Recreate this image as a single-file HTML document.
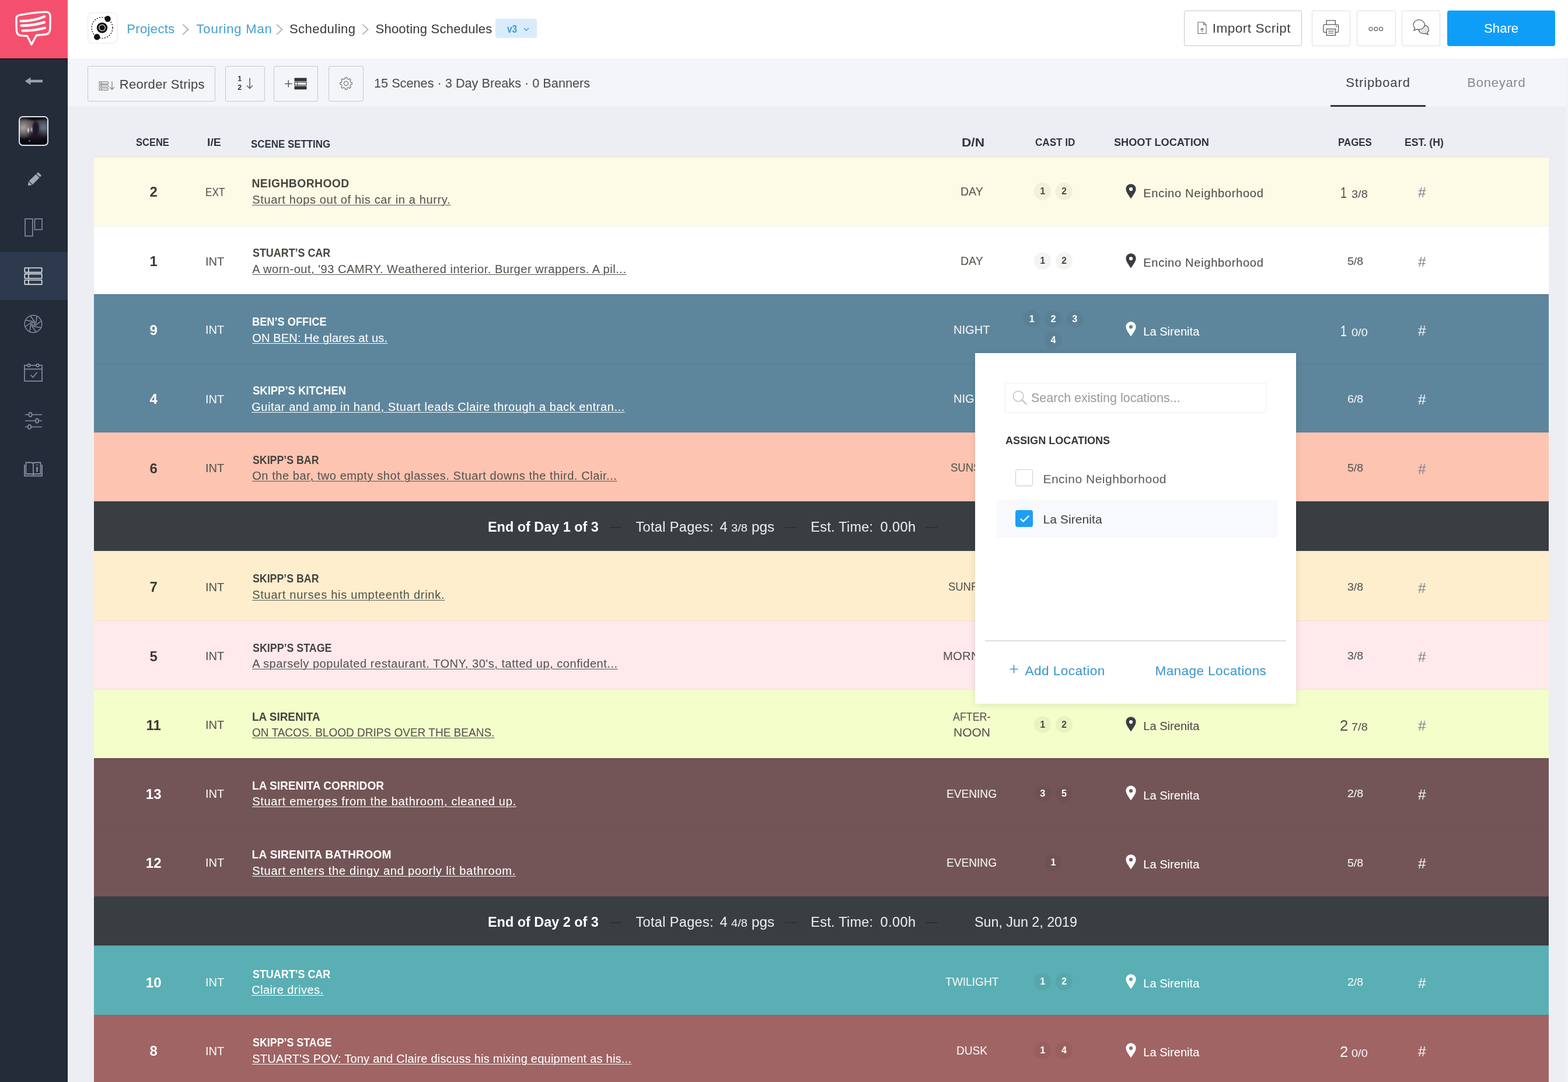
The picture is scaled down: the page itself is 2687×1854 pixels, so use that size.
<!DOCTYPE html>
<html lang="en"><head><meta charset="utf-8"><title>Shooting Schedules - Stripboard</title>
<style>
*{box-sizing:border-box;margin:0;padding:0}
html{background:#eceef3}
body{width:2687px;height:1854px;background:#eceef3;font-family:"Liberation Sans",sans-serif;color:#444}
#root{position:relative;width:2687px;height:1854px;overflow:hidden}
#app{position:absolute;left:-10px;top:-10px;width:2707px;height:1874px;overflow:hidden;filter:blur(0.6px);
 background:linear-gradient(#f4506e,#f4506e) 0 0/126px 109.5px no-repeat,linear-gradient(#242b39,#242b39) 0 0/126px 100% no-repeat,linear-gradient(#fff,#fff) 0 0/100% 109.5px no-repeat,linear-gradient(#f3f5f9,#f3f5f9) 0 0/100% 192px no-repeat,#eceef3}
#page{position:absolute;left:10px;top:10px;width:2687px;height:1854px}
.abs,.t,.ic,.row,.db,.btn,.badge{position:absolute}
.t{white-space:nowrap;line-height:1;display:block;transform-origin:0 0;-webkit-text-stroke:.08px}
.t.c{text-align:center}
.t.u{text-decoration:underline;text-decoration-thickness:1.4px;text-underline-offset:2px}
.ic{display:block;overflow:visible}
.side{position:absolute;left:0;top:0;width:116px;height:1854px;background:#242b39}
.logo{position:absolute;left:0;top:0;width:116px;height:99.5px;background:#f4506e}
.active{position:absolute;left:0;top:432px;width:116px;height:82px;background:#2d394c}
.thumb{position:absolute;left:32px;top:199px;width:50.5px;height:50.5px;border:2.2px solid #e3e6f0;border-radius:7px;overflow:hidden;
 background:
 radial-gradient(ellipse 5% 13% at 31% 47%,rgba(250,235,245,.9) 0%,rgba(250,235,245,0) 100%),
 radial-gradient(ellipse 5% 12% at 43% 45%,rgba(235,220,235,.75) 0%,rgba(235,220,235,0) 100%),
 radial-gradient(ellipse 5% 4% at 35% 86%,rgba(215,215,215,.7) 0%,rgba(215,215,215,0) 100%),
 radial-gradient(ellipse 15% 30% at 58% 38%,rgba(22,18,34,.95) 0%,rgba(22,18,34,.8) 60%,rgba(22,18,34,0) 100%),
 radial-gradient(ellipse 32% 28% at 56% 68%,rgba(30,20,36,.9) 0%,rgba(30,20,36,0) 100%),
 radial-gradient(ellipse 36% 36% at 86% 36%,rgba(108,117,132,.95) 0%,rgba(74,82,99,.6) 55%,rgba(40,44,60,0) 100%),
 radial-gradient(ellipse 46% 42% at 12% 38%,rgba(170,164,160,.97) 0%,rgba(130,122,124,.75) 50%,rgba(60,50,60,0) 100%),
 linear-gradient(to bottom,#050508 0%,#0c0c10 8%,#44444a 15%,#504e56 40%,#2c2632 62%,#0c0a16 80%,#030306 100%)}
.top{position:absolute;left:116px;top:0;width:2583px;height:99.5px;background:#fff}
.toolbar{position:absolute;left:116px;top:99.5px;width:2583px;height:82.5px;background:#f3f5f9;border-bottom:1.5px solid #f6f7fa}
.btn{border:1.7px solid #c6c8cd;border-radius:3px}
.btn.l{border-color:#dcdee2;border-width:1.5px}
.btn.w{background:#fff}
.share{position:absolute;background:#0e9ef7;border-radius:4px}
.plogo{position:absolute;background:#fff;border-radius:6px;box-shadow:0 0 4px rgba(0,0,0,.14)}
.ver{position:absolute;background:#d9ecfb;border-radius:3px}
.tabline{position:absolute;background:#30343c}
.row{left:161px;width:2493px;height:119px}
.row:before{content:"";position:absolute;left:0;right:0;top:0;height:1.2px;background:rgba(0,0,0,.05)}
.db{left:161px;width:2493px;background:#393e43}
.badge{width:29.6px;height:29.6px;border-radius:50%;background:rgba(40,40,20,.05);text-align:center;font-weight:700;font-size:16px;line-height:30.5px}
.dark .badge{background:rgba(0,0,0,.045)}
.popup{position:absolute;left:1671px;top:604.5px;width:550.3px;height:601.3px;background:#fff;box-shadow:0 2px 12px rgba(0,0,0,.1)}
.search{position:absolute;border:1.3px solid #eeeff0;border-radius:1px;background:#fff}
.cb{position:absolute;width:30.4px;height:29px;border-radius:4px}
.cb.off{border:1.6px solid #cfcfcf;background:#fff;box-shadow:0 1px 2px rgba(0,0,0,.06)}
.cb.on{background:#1e9ef6}
.hl{position:absolute;background:#f8f9fc}
.hr{position:absolute;height:1.5px;background:#dcdee1}
</style></head>
<body>
<div id="root">
<div id="app">
<div id="page">
<aside class="side">
<div class="logo">
<svg class="ic" style="left:22px;top:14px" width="70" height="68" viewBox="22 14 70 68" ><path d="M34.5 25.6C47 23.3 64 21 78.5 20.5c5-0.2 7.5 2.8 7.6 7.2 0.2 7.5 0.1 15-0.3 22.5-0.3 5.2-3 8.3-8.2 8.8-5 0.5-10 1-15.2 1.5L54 76.3 46.8 61.7c-3.8-0.1-7.6-0.4-11.4-0.9-4.4-0.6-6.6-3.3-6.9-7.6-0.5-7.2-0.7-14.5-0.5-21.7 0.1-3.3 2.3-5.3 6.5-5.9z" fill="none" stroke="#fff" stroke-width="3.3" stroke-linejoin="round"/><path d="M35.5 36.2c14 0.2 28-2.7 40.5-7.7" fill="none" stroke="#fff" stroke-width="4.3" stroke-linecap="round"/><path d="M36.5 43.8c13.5 0.3 27-1.9 39.5-5.7" fill="none" stroke="#fff" stroke-width="4.3" stroke-linecap="round"/><path d="M38.5 52.6c13.5 0.3 26-1.4 38.5-4.8" fill="none" stroke="#fff" stroke-width="4.3" stroke-linecap="round"/></svg>
</div>
<div class="abs" style="left:0;top:99.5px;width:116px;height:2px;background:#2a1721"></div>
<div class="abs" style="left:114.3px;top:101px;width:1.7px;height:1769px;background:#1d2830"></div>
<svg class="ic" style="left:42px;top:131px" width="32" height="16" viewBox="0 0 32 16" ><path d="M0.7 8L10.5 1.5v4.3H31v4.4H10.5v4.3z" fill="#96a1af"/></svg>
<div class="thumb"></div>
<svg class="ic" style="left:42.5px;top:292.5px" width="30" height="30" viewBox="0 0 28 28" ><g fill="#a0aab6" transform="rotate(45 14 14)"><rect x="10" y="0.5" width="8" height="3.6" rx="1.2"/><rect x="10" y="5.3" width="8" height="15.5"/><path d="M10 22h8l-4 5.5z"/></g></svg>
<svg class="ic" style="left:42px;top:373.5px" width="31" height="32" viewBox="0 0 31 32" ><rect x="1" y="1" width="12.8" height="29.5" fill="none" stroke="#838fa0" stroke-width="1.6"/><rect x="17.5" y="1" width="12.5" height="18.5" fill="none" stroke="#838fa0" stroke-width="1.6"/></svg>
<div class="active"></div>
<svg class="ic" style="left:41px;top:457.5px" width="32" height="31" viewBox="0 0 32 31" ><rect x="1.3" y="1" width="29.4" height="7.6" rx="0.6" fill="none" stroke="#e6e9ee" stroke-width="1.6"/><path d="M8 1v7.6" stroke="#e6e9ee" stroke-width="1.6"/><rect x="1.3" y="11.4" width="29.4" height="7.6" rx="0.6" fill="none" stroke="#e6e9ee" stroke-width="1.6"/><path d="M8 11.4v7.6" stroke="#e6e9ee" stroke-width="1.6"/><rect x="1.3" y="21.8" width="29.4" height="7.6" rx="0.6" fill="none" stroke="#e6e9ee" stroke-width="1.6"/><path d="M8 21.8v7.6" stroke="#e6e9ee" stroke-width="1.6"/></svg>
<svg class="ic" style="left:41px;top:539px" width="32" height="32" viewBox="0 0 32 32" ><g fill="none" stroke="#838fa0" stroke-width="1.5"><circle cx="16" cy="16" r="14.8"/><circle cx="16" cy="16" r="2.6"/><path d="M29.7 11.0L18.8 19.1M29.2 22.2L15.8 20.2M21.0 29.7L12.9 18.8M9.8 29.2L11.8 15.8M2.3 21.0L13.2 12.9M2.8 9.8L16.2 11.8M11.0 2.3L19.1 13.2M22.2 2.8L20.2 16.2"/></g></svg>
<svg class="ic" style="left:41px;top:622px" width="32" height="32" viewBox="0 0 32 32" ><g fill="none" stroke="#838fa0" stroke-width="1.7"><rect x="1" y="4" width="30" height="27"/><path d="M1 10.5h30"/><circle cx="8.5" cy="4" r="2.3" fill="#242b39"/><circle cx="23.5" cy="4" r="2.3" fill="#242b39"/><path d="M11.5 20.5l4 4 7-8.5"/></g></svg>
<svg class="ic" style="left:43px;top:706px" width="29" height="30" viewBox="0 0 29 30" ><g fill="none" stroke="#838fa0" stroke-width="1.7"><path d="M0 4.5h29M0 15h29M0 25.5h29"/><ellipse cx="9" cy="4.5" rx="2.6" ry="3.6" fill="#242b39"/><ellipse cx="20.5" cy="15" rx="2.6" ry="3.6" fill="#242b39"/><ellipse cx="7.5" cy="25.5" rx="2.6" ry="3.6" fill="#242b39"/></g></svg>
<svg class="ic" style="left:41px;top:791px" width="32" height="26" viewBox="0 0 32 26" ><g fill="none" stroke="#838fa0" stroke-width="1.8"><path d="M3.5 1.5h9c2 0 3.5 1.2 3.5 3v18.5c0-1.2-1.5-2-3.5-2h-9zM28.5 1.5h-9c-2 0-3.5 1.2-3.5 3v18.5c0-1.2 1.5-2 3.5-2h9z"/><path d="M1 5v19.5h30V5"/><path d="M22.5 9v8.5" stroke-width="2.6"/><path d="M22.5 4.8v1.6" stroke-width="2.6"/></g></svg>
</aside>
<header class="top">
<div class="plogo" style="left:36px;top:23px;width:47.5px;height:49.5px"></div>
<svg class="ic" style="left:39px;top:27px" width="40" height="41" viewBox="0 0 40 41" ><circle cx="20" cy="20.6" r="18" fill="none" stroke="#111" stroke-width="1.3" stroke-dasharray="2.2 2.2"/><circle cx="20" cy="20.6" r="9.2" fill="#111"/><circle cx="20" cy="20.6" r="5.3" fill="none" stroke="#c4c4c4" stroke-width="1.4"/><circle cx="29.5" cy="5.2" r="5.2" fill="#111"/><circle cx="11.2" cy="36.2" r="5.2" fill="#111"/></svg>
<a class="t" style="left:101.2px;top:39.05px;font-size:22px;color:#4aa3cf;letter-spacing:0.38px;">Projects</a>
<svg class="ic" style="left:195.5px;top:40.5px" width="12" height="19" viewBox="0 0 12 19" ><path d="M1.2 1l9.4 8.5-9.4 8.5" fill="none" stroke="#a3a3a3" stroke-width="1.6"/></svg>
<a class="t" style="left:220.5px;top:39.05px;font-size:22px;color:#4aa3cf;letter-spacing:0.82px;">Touring Man</a>
<svg class="ic" style="left:356.5px;top:40.5px" width="12" height="19" viewBox="0 0 12 19" ><path d="M1.2 1l9.4 8.5-9.4 8.5" fill="none" stroke="#a3a3a3" stroke-width="1.6"/></svg>
<span class="t" style="left:379.9px;top:39.05px;font-size:22px;color:#3d3d3d;letter-spacing:0.47px;">Scheduling</span>
<svg class="ic" style="left:504px;top:40.5px" width="12" height="19" viewBox="0 0 12 19" ><path d="M1.2 1l9.4 8.5-9.4 8.5" fill="none" stroke="#a3a3a3" stroke-width="1.6"/></svg>
<span class="t" style="left:527.5px;top:39.05px;font-size:22px;color:#3d3d3d;letter-spacing:0.24px;">Shooting Schedules</span>
<div class="ver" style="left:733.4px;top:32px;width:70.3px;height:33px"></div>
<span class="t" style="left:753.2px;top:42.05px;font-size:17.5px;color:#3f9bd0;font-weight:700;-webkit-text-stroke:0;transform:scaleX(0.882);">v3</span>
<svg class="ic" style="left:781px;top:46.5px" width="10" height="7" viewBox="0 0 10 7" ><path d="M1 1.2l4 4 4-4" fill="none" stroke="#3f9bd0" stroke-width="1.5"/></svg>
<div class="btn w" style="left:1913px;top:18px;width:202.3px;height:61px"></div>
<svg class="ic" style="left:1936.3px;top:36.6px" width="16" height="21.5" viewBox="0 0 16 21.5" ><g fill="none" stroke="#6a6a6a" stroke-width="1.15"><path d="M1 1h9.5l4.5 4.5V20.5H1z"/><path d="M10.5 1v4.5H15"/><path d="M8 18.5v-7M5 14.3l3-3 3 3"/></g></svg>
<span class="t" style="left:1961.7px;top:38.05px;font-size:22.5px;color:#444;letter-spacing:0.53px;">Import Script</span>
<div class="btn w l" style="left:2131.6px;top:18px;width:66.2px;height:61px"></div>
<div class="btn w l" style="left:2209.4px;top:18px;width:66.2px;height:61px"></div>
<div class="btn w l" style="left:2285.8px;top:18px;width:66.2px;height:61px"></div>
<svg class="ic" style="left:2150.5px;top:33.5px" width="27.5" height="27.5" viewBox="0 0 29 29" ><g fill="none" stroke="#555" stroke-width="1.35"><path d="M6.5 8.5V1.2h16v7.3"/><rect x="1" y="8.5" width="27" height="14" rx="1.8"/><rect x="6.5" y="16.5" width="16" height="11.5" fill="#fff"/><path d="M9.5 20.5h10M9.5 24h10" stroke="#888" stroke-width="1.8"/></g><circle cx="24.5" cy="12" r="1.1" fill="#555"/></svg>
<svg class="ic" style="left:2229.3px;top:44.5px" width="26" height="9" viewBox="0 0 26 9" ><g fill="none" stroke="#666" stroke-width="1.25"><circle cx="4" cy="4.5" r="3"/><circle cx="12.8" cy="4.5" r="3"/><circle cx="21.6" cy="4.5" r="3"/></g></svg>
<svg class="ic" style="left:2305px;top:33.2px" width="29" height="27" viewBox="0 0 30 28" ><path d="M19.5 10.5c5 0 9 3.2 9 7.6 0 2.3-1.1 4.3-2.9 5.7l1.7 3.3-5.2-1.8c-0.8 0.2-1.7 0.3-2.6 0.3-5 0-9-3.2-9-7.5s4-7.6 9-7.6z" fill="#e2e2e2" stroke="#555" stroke-width="1.25"/><path d="M11 1c5.5 0 10 3.8 10 8.6s-4.5 8.6-10 8.6c-1.2 0-2.3-0.2-3.4-0.5L2 19.8l1.9-3.9C2.1 14.3 1 12.1 1 9.6 1 4.8 5.5 1 11 1z" fill="#fff" stroke="#555" stroke-width="1.25"/></svg>
<div class="share" style="left:2364px;top:18px;width:185.3px;height:61px"></div>
<span class="t" style="left:2426.6px;top:38.05px;font-size:22.5px;color:#fff;transform:scaleX(0.986);">Share</span>
</header>
<div class="toolbar">
<div class="btn" style="left:33.7px;top:13.5px;width:219.6px;height:61px"></div>
<svg class="ic" style="left:53px;top:39.5px" width="29" height="17" viewBox="0 0 29 17" ><g fill="none" stroke="#858585" stroke-width="1.2"><rect x="1" y="1.2" width="15.5" height="3.4" rx="0.8"/><rect x="1" y="6.6" width="15.5" height="3.4" rx="0.8"/><rect x="1" y="12" width="15.5" height="3.4" rx="0.8"/><path d="M4.8 1.2v3.4M4.8 6.6v3.4M4.8 12v3.4"/><path d="M23 0.5v13.5M19.3 10.5l3.7 3.8 3.7-3.8" stroke-width="1.3"/></g></svg>
<span class="t" style="left:88.7px;top:34.55px;font-size:22px;color:#484848;letter-spacing:0.31px;">Reorder Strips</span>
<div class="btn" style="left:269.8px;top:13.5px;width:68.2px;height:61px"></div>
<span class="t" style="left:291.3px;top:29.1px;font-size:12.5px;font-weight:700;color:#3c3c3c">1</span>
<span class="t" style="left:291.3px;top:44.7px;font-size:12.5px;font-weight:700;color:#3c3c3c">2</span>
<svg class="ic" style="left:305.5px;top:33.5px" width="12" height="20" viewBox="0 0 12 20" ><path d="M6 0.5v17.5M1 13.5l5 5 5-5" fill="none" stroke="#666" stroke-width="1.6"/></svg>
<div class="btn" style="left:352.6px;top:13.5px;width:76.6px;height:61px"></div>
<svg class="ic" style="left:372px;top:33.5px" width="38" height="21" viewBox="0 0 38 21" ><path d="M0.3 10.5h12M6.3 4.5v12" stroke="#555" stroke-width="1.5" fill="none"/><rect x="16.5" y="0.5" width="21" height="5.8" fill="#333"/><rect x="17.1" y="7.8" width="19.8" height="5" fill="#fff" stroke="#333" stroke-width="1.2"/><path d="M21.5 7.8v5" stroke="#333" stroke-width="1"/><rect x="16.5" y="14.5" width="21" height="5.8" fill="#333"/></svg>
<div class="btn" style="left:446.5px;top:13.5px;width:60.4px;height:61px"></div>
<svg class="ic" style="left:466px;top:32.5px" width="22" height="22" viewBox="0 0 22 22" ><path d="M19.00 9.21L21.31 9.62L21.31 12.38L19.00 12.79L17.92 15.39L19.27 17.31L17.31 19.27L15.39 17.92L12.79 19.00L12.38 21.31L9.62 21.31L9.21 19.00L6.61 17.92L4.69 19.27L2.73 17.31L4.08 15.39L3.00 12.79L0.69 12.38L0.69 9.62L3.00 9.21L4.08 6.61L2.73 4.69L4.69 2.73L6.61 4.08L9.21 3.00L9.62 0.69L12.38 0.69L12.79 3.00L15.39 4.08L17.31 2.73L19.27 4.69L17.92 6.61z" fill="none" stroke="#777" stroke-width="1.2" stroke-linejoin="round"/><circle cx="11" cy="11" r="3.6" fill="none" stroke="#777" stroke-width="1.2"/></svg>
<span class="t" style="left:524.5px;top:32.55px;font-size:22px;color:#4d4d4d;transform:scaleX(0.986);">15 Scenes · 3 Day Breaks · 0 Banners</span>
<span class="t" style="left:2190.3px;top:31.55px;font-size:22px;color:#42454c;letter-spacing:0.91px;">Stripboard</span>
<span class="t" style="left:2398.3px;top:31.55px;font-size:22px;color:#8a8d95;letter-spacing:0.74px;">Boneyard</span>
<div class="tabline" style="left:2164.4px;top:80.1px;width:162.3px;height:3.6px"></div>
</div>
<div class="thead">
<span class="t" style="left:232.9px;top:235.05px;font-size:18.3px;color:#2f3541;font-weight:700;-webkit-text-stroke:0;transform:scaleX(0.903);">SCENE</span>
<span class="t" style="left:354.6px;top:235.05px;font-size:18.3px;color:#2f3541;font-weight:700;-webkit-text-stroke:0;transform:scaleX(1.068);">I/E</span>
<span class="t" style="left:430.4px;top:238.05px;font-size:18.3px;color:#2f3541;font-weight:700;-webkit-text-stroke:0;transform:scaleX(0.924);">SCENE SETTING</span>
<span class="t" style="left:1647.6px;top:234.05px;font-size:20.3px;color:#2f3541;font-weight:700;-webkit-text-stroke:0;transform:scaleX(1.118);">D/N</span>
<span class="t" style="left:1773.5px;top:235.05px;font-size:18.3px;color:#2f3541;font-weight:700;-webkit-text-stroke:0;transform:scaleX(0.934);">CAST ID</span>
<span class="t" style="left:1908.8px;top:235.05px;font-size:18.3px;color:#2f3541;font-weight:700;-webkit-text-stroke:0;transform:scaleX(0.992);">SHOOT LOCATION</span>
<span class="t" style="left:2293.0px;top:235.05px;font-size:18.3px;color:#2f3541;font-weight:700;-webkit-text-stroke:0;transform:scaleX(0.923);">PAGES</span>
<span class="t" style="left:2406.6px;top:235.05px;font-size:18.3px;color:#2f3541;font-weight:700;-webkit-text-stroke:0;transform:scaleX(0.967);">EST. (H)</span>
</div>
<div class="abs" style="left:2683px;top:100px;width:16px;height:1770px;background:#f2f3f7"></div>
<main class="board">
<div class="row" style="top:268.4px;background:#fdfbe6"><span class="t c " style="left:62.2px;top:48.65px;width:80px;font-size:24px;color:#3b3b36;font-weight:700;-webkit-text-stroke:0;">2</span><span class="t" style="left:190.7px;top:50.65px;font-size:20.3px;color:#55554f;transform:scaleX(0.849);">EXT</span><span class="t" style="left:270.5px;top:36.65px;font-size:19.3px;color:#44443f;font-weight:700;-webkit-text-stroke:0;letter-spacing:0.45px;">NEIGHBORHOOD</span><span class="t u" style="left:271.2px;top:63.65px;font-size:20px;color:#55554f;letter-spacing:0.65px;">Stuart hops out of his car in a hurry.</span><span class="t" style="left:1484.6px;top:49.65px;font-size:20.3px;color:#55554f;transform:scaleX(0.963);">DAY</span><span class="badge" style="left:1610.9px;top:44.9px;color:#4c4c47">1</span><span class="badge" style="left:1647.6px;top:44.9px;color:#4c4c47">2</span><svg class="ic" style="left:1768.3px;top:46.3px" width="18" height="26" viewBox="0 0 18 26" ><path d="M9 0.3C4.2 0.3 0.4 4 0.4 8.8c0 5.4 5.3 11.4 8.6 16.8 3.3-5.4 8.6-11.4 8.6-16.8C17.6 4 13.8 0.3 9 0.3z" fill="#3a3d41"/><circle cx="9" cy="9.1" r="3.1" fill="#fff"/></svg><span class="t" style="left:1798.3px;top:52.65px;font-size:20px;color:#4d4d48;letter-spacing:0.73px;">Encino Neighborhood</span><span class="t" style="left:2135.7px;top:48.65px;font-size:26px;color:#55554f;transform:scaleX(0.746);">1</span><span class="t" style="left:2154.8px;top:55.65px;font-size:18.5px;color:#55554f;transform:scaleX(1.078);">3/8</span><span class="t" style="left:2269.0px;top:49.65px;font-size:24.5px;color:#828a90;">#</span></div>
<div class="row" style="top:387.0px;background:#ffffff"><span class="t c " style="left:62.2px;top:49.05px;width:80px;font-size:24px;color:#3b3b36;font-weight:700;-webkit-text-stroke:0;">1</span><span class="t" style="left:191.1px;top:51.05px;font-size:20.3px;color:#55554f;transform:scaleX(0.991);">INT</span><span class="t" style="left:271.5px;top:37.05px;font-size:19.3px;color:#44443f;font-weight:700;-webkit-text-stroke:0;transform:scaleX(0.928);">STUART’S CAR</span><span class="t u" style="left:271.2px;top:64.05px;font-size:20px;color:#55554f;letter-spacing:0.53px;">A worn-out, '93 CAMRY. Weathered interior. Burger wrappers. A pil...</span><span class="t" style="left:1484.6px;top:50.05px;font-size:20.3px;color:#55554f;transform:scaleX(0.963);">DAY</span><span class="badge" style="left:1610.9px;top:45.3px;color:#4c4c47">1</span><span class="badge" style="left:1647.6px;top:45.3px;color:#4c4c47">2</span><svg class="ic" style="left:1768.3px;top:46.7px" width="18" height="26" viewBox="0 0 18 26" ><path d="M9 0.3C4.2 0.3 0.4 4 0.4 8.8c0 5.4 5.3 11.4 8.6 16.8 3.3-5.4 8.6-11.4 8.6-16.8C17.6 4 13.8 0.3 9 0.3z" fill="#3a3d41"/><circle cx="9" cy="9.1" r="3.1" fill="#fff"/></svg><span class="t" style="left:1798.3px;top:53.05px;font-size:20px;color:#4d4d48;letter-spacing:0.73px;">Encino Neighborhood</span><span class="t" style="left:2148.0px;top:51.05px;font-size:19px;color:#55554f;transform:scaleX(1.029);">5/8</span><span class="t" style="left:2269.0px;top:50.05px;font-size:24.5px;color:#828a90;">#</span></div>
<div class="row dark" style="top:504.4px;background:#5d869c"><span class="t c " style="left:62.2px;top:49.65px;width:80px;font-size:24px;color:#fff;font-weight:700;-webkit-text-stroke:0;">9</span><span class="t" style="left:191.1px;top:50.65px;font-size:20.3px;color:#f2f2f2;transform:scaleX(0.991);">INT</span><span class="t" style="left:270.6px;top:37.65px;font-size:19.3px;color:#fff;font-weight:700;-webkit-text-stroke:0;transform:scaleX(0.945);">BEN’S OFFICE</span><span class="t u" style="left:271.2px;top:64.65px;font-size:20px;color:#fff;letter-spacing:0.17px;">ON BEN: He glares at us.</span><span class="t" style="left:1472.7px;top:50.65px;font-size:20.3px;color:#f4f4f4;transform:scaleX(0.989);">NIGHT</span><span class="badge" style="left:1592.4px;top:27.5px;color:#fff">1</span><span class="badge" style="left:1629.2px;top:27.5px;color:#fff">2</span><span class="badge" style="left:1666.0px;top:27.5px;color:#fff">3</span><span class="badge" style="left:1629.2px;top:63.8px;color:#fff">4</span><svg class="ic" style="left:1768.3px;top:47.0px" width="18" height="26" viewBox="0 0 18 26" ><path d="M9 0.3C4.2 0.3 0.4 4 0.4 8.8c0 5.4 5.3 11.4 8.6 16.8 3.3-5.4 8.6-11.4 8.6-16.8C17.6 4 13.8 0.3 9 0.3z" fill="#fff"/><circle cx="9" cy="9.1" r="3.1" fill="#5d869c"/></svg><span class="t" style="left:1798.3px;top:53.65px;font-size:20px;color:#fff;letter-spacing:0.04px;">La Sirenita</span><span class="t" style="left:2135.7px;top:49.65px;font-size:26px;color:#f4f4f4;transform:scaleX(0.746);">1</span><span class="t" style="left:2154.8px;top:56.65px;font-size:18.5px;color:#f4f4f4;transform:scaleX(1.078);">0/0</span><span class="t" style="left:2269.0px;top:50.65px;font-size:24.5px;color:#eef2f4;">#</span></div>
<div class="row dark" style="top:622.8px;background:#5d869c"><span class="t c " style="left:62.2px;top:49.25px;width:80px;font-size:24px;color:#fff;font-weight:700;-webkit-text-stroke:0;">4</span><span class="t" style="left:191.1px;top:51.25px;font-size:20.3px;color:#f2f2f2;transform:scaleX(0.991);">INT</span><span class="t" style="left:271.5px;top:37.25px;font-size:19.3px;color:#fff;font-weight:700;-webkit-text-stroke:0;transform:scaleX(0.958);">SKIPP’S KITCHEN</span><span class="t u" style="left:270.2px;top:64.25px;font-size:20px;color:#fff;letter-spacing:0.56px;">Guitar and amp in hand, Stuart leads Claire through a back entran...</span><span class="t" style="left:1472.7px;top:50.25px;font-size:20.3px;color:#f4f4f4;transform:scaleX(0.989);">NIGHT</span><span class="badge" style="left:1610.9px;top:45.4px;color:#fff">1</span><span class="badge" style="left:1647.6px;top:45.4px;color:#fff">2</span><svg class="ic" style="left:1768.3px;top:46.8px" width="18" height="26" viewBox="0 0 18 26" ><path d="M9 0.3C4.2 0.3 0.4 4 0.4 8.8c0 5.4 5.3 11.4 8.6 16.8 3.3-5.4 8.6-11.4 8.6-16.8C17.6 4 13.8 0.3 9 0.3z" fill="#fff"/><circle cx="9" cy="9.1" r="3.1" fill="#5d869c"/></svg><span class="t" style="left:1798.3px;top:53.25px;font-size:20px;color:#fff;letter-spacing:0.04px;">La Sirenita</span><span class="t" style="left:2148.0px;top:51.25px;font-size:19px;color:#f4f4f4;transform:scaleX(1.029);">6/8</span><span class="t" style="left:2269.0px;top:50.25px;font-size:24.5px;color:#eef2f4;">#</span></div>
<div class="row" style="top:740.7px;background:#fec4b2"><span class="t c " style="left:62.2px;top:50.35px;width:80px;font-size:24px;color:#3b3b36;font-weight:700;-webkit-text-stroke:0;">6</span><span class="t" style="left:191.1px;top:51.35px;font-size:20.3px;color:#55554f;transform:scaleX(0.991);">INT</span><span class="t" style="left:271.5px;top:38.35px;font-size:19.3px;color:#44443f;font-weight:700;-webkit-text-stroke:0;transform:scaleX(0.921);">SKIPP’S BAR</span><span class="t u" style="left:271.2px;top:64.35px;font-size:20px;color:#55554f;letter-spacing:0.58px;">On the bar, two empty shot glasses. Stuart downs the third. Clair...</span><span class="t" style="left:1467.5px;top:50.35px;font-size:20.3px;color:#55554f;transform:scaleX(0.91);">SUNSET</span><span class="badge" style="left:1610.9px;top:45.8px;color:#4c4c47">1</span><span class="badge" style="left:1647.6px;top:45.8px;color:#4c4c47">2</span><svg class="ic" style="left:1768.3px;top:47.2px" width="18" height="26" viewBox="0 0 18 26" ><path d="M9 0.3C4.2 0.3 0.4 4 0.4 8.8c0 5.4 5.3 11.4 8.6 16.8 3.3-5.4 8.6-11.4 8.6-16.8C17.6 4 13.8 0.3 9 0.3z" fill="#3a3d41"/><circle cx="9" cy="9.1" r="3.1" fill="#fff"/></svg><span class="t" style="left:1798.3px;top:53.35px;font-size:20px;color:#4d4d48;letter-spacing:0.04px;">La Sirenita</span><span class="t" style="left:2148.0px;top:51.35px;font-size:19px;color:#55554f;transform:scaleX(1.029);">5/8</span><span class="t" style="left:2269.0px;top:51.35px;font-size:24.5px;color:#828a90;">#</span></div>
<div class="db" style="top:858.6px;height:86.2px"><span class="t" style="left:674.5px;top:33.45px;font-size:23.5px;color:#fff;font-weight:700;-webkit-text-stroke:0;transform:scaleX(0.996);">End of Day 1 of 3</span><span class="abs" style="left:883.5px;top:44.2px;width:20.5px;height:2px;background:#2d3135"></span><span class="abs" style="left:1184px;top:44.2px;width:20.5px;height:2px;background:#2d3135"></span><span class="abs" style="left:1425px;top:44.2px;width:20.5px;height:2px;background:#2d3135"></span><span class="t" style="left:928.5px;top:33.45px;font-size:23.5px;color:#e9eaeb;letter-spacing:0.34px;">Total Pages:</span><span class="t" style="left:1072.5px;top:33.45px;font-size:23.5px;color:#e9eaeb;">4</span><span class="t" style="left:1092.0px;top:38.45px;font-size:17.5px;color:#e9eaeb;transform:scaleX(1.144);">3/8</span><span class="t" style="left:1126.5px;top:33.45px;font-size:23.5px;color:#e9eaeb;transform:scaleX(1.029);">pgs</span><span class="t" style="left:1228.3px;top:33.45px;font-size:23.5px;color:#e9eaeb;letter-spacing:0.26px;">Est. Time:</span><span class="t" style="left:1347.5px;top:33.45px;font-size:23.5px;color:#e9eaeb;letter-spacing:0.47px;">0.00h</span><span class="t" style="left:1512.5px;top:33.45px;font-size:23.5px;color:#e9eaeb;letter-spacing:0.32px;">Sat, Jun 1, 2019</span></div>
<div class="row" style="top:944.3px;background:#feeecd"><span class="t c " style="left:62.2px;top:49.75px;width:80px;font-size:24px;color:#3b3b36;font-weight:700;-webkit-text-stroke:0;">7</span><span class="t" style="left:191.1px;top:51.75px;font-size:20.3px;color:#55554f;transform:scaleX(0.991);">INT</span><span class="t" style="left:271.5px;top:37.75px;font-size:19.3px;color:#44443f;font-weight:700;-webkit-text-stroke:0;transform:scaleX(0.921);">SKIPP’S BAR</span><span class="t u" style="left:271.2px;top:64.75px;font-size:20px;color:#55554f;letter-spacing:0.75px;">Stuart nurses his umpteenth drink.</span><span class="t" style="left:1464.0px;top:50.75px;font-size:20.3px;color:#55554f;transform:scaleX(0.909);">SUNRISE</span><span class="badge" style="left:1629.2px;top:46.1px;color:#4c4c47">1</span><svg class="ic" style="left:1768.3px;top:47.5px" width="18" height="26" viewBox="0 0 18 26" ><path d="M9 0.3C4.2 0.3 0.4 4 0.4 8.8c0 5.4 5.3 11.4 8.6 16.8 3.3-5.4 8.6-11.4 8.6-16.8C17.6 4 13.8 0.3 9 0.3z" fill="#3a3d41"/><circle cx="9" cy="9.1" r="3.1" fill="#fff"/></svg><span class="t" style="left:1798.3px;top:53.75px;font-size:20px;color:#4d4d48;letter-spacing:0.04px;">La Sirenita</span><span class="t" style="left:2148.0px;top:51.75px;font-size:19px;color:#55554f;transform:scaleX(1.029);">3/8</span><span class="t" style="left:2269.0px;top:51.75px;font-size:24.5px;color:#828a90;">#</span></div>
<div class="row" style="top:1063.2px;background:#ffe9ea"><span class="t c " style="left:62.2px;top:49.85px;width:80px;font-size:24px;color:#3b3b36;font-weight:700;-webkit-text-stroke:0;">5</span><span class="t" style="left:191.1px;top:50.85px;font-size:20.3px;color:#55554f;transform:scaleX(0.991);">INT</span><span class="t" style="left:271.5px;top:37.85px;font-size:19.3px;color:#44443f;font-weight:700;-webkit-text-stroke:0;transform:scaleX(0.925);">SKIPP’S STAGE</span><span class="t u" style="left:271.2px;top:63.85px;font-size:20px;color:#55554f;letter-spacing:0.54px;">A sparsely populated restaurant. TONY, 30's, tatted up, confident...</span><span class="t" style="left:1455.0px;top:50.85px;font-size:20.3px;color:#55554f;letter-spacing:0.21px;">MORNING</span><span class="badge" style="left:1610.9px;top:45.6px;color:#4c4c47">1</span><span class="badge" style="left:1647.6px;top:45.6px;color:#4c4c47">2</span><svg class="ic" style="left:1768.3px;top:47.0px" width="18" height="26" viewBox="0 0 18 26" ><path d="M9 0.3C4.2 0.3 0.4 4 0.4 8.8c0 5.4 5.3 11.4 8.6 16.8 3.3-5.4 8.6-11.4 8.6-16.8C17.6 4 13.8 0.3 9 0.3z" fill="#3a3d41"/><circle cx="9" cy="9.1" r="3.1" fill="#fff"/></svg><span class="t" style="left:1798.3px;top:53.85px;font-size:20px;color:#4d4d48;letter-spacing:0.04px;">La Sirenita</span><span class="t" style="left:2148.0px;top:50.85px;font-size:19px;color:#55554f;transform:scaleX(1.029);">3/8</span><span class="t" style="left:2269.0px;top:50.85px;font-size:24.5px;color:#828a90;">#</span></div>
<div class="row" style="top:1181.0px;background:#f3fecb"><span class="t c " style="left:62.2px;top:50.05px;width:80px;font-size:24px;color:#3b3b36;font-weight:700;-webkit-text-stroke:0;">11</span><span class="t" style="left:191.1px;top:51.05px;font-size:20.3px;color:#55554f;transform:scaleX(0.991);">INT</span><span class="t" style="left:270.5px;top:38.05px;font-size:19.3px;color:#44443f;font-weight:700;-webkit-text-stroke:0;transform:scaleX(0.981);">LA SIRENITA</span><span class="t u" style="left:271.2px;top:64.05px;font-size:20px;color:#55554f;transform:scaleX(0.951);">ON TACOS. BLOOD DRIPS OVER THE BEANS.</span><span class="t" style="left:1472.0px;top:37.05px;font-size:20.3px;color:#55554f;transform:scaleX(0.879);">AFTER-</span><span class="t" style="left:1473.1px;top:64.05px;font-size:20.3px;color:#55554f;transform:scaleX(1.033);">NOON</span><span class="badge" style="left:1610.9px;top:45.5px;color:#4c4c47">1</span><span class="badge" style="left:1647.6px;top:45.5px;color:#4c4c47">2</span><svg class="ic" style="left:1768.3px;top:46.9px" width="18" height="26" viewBox="0 0 18 26" ><path d="M9 0.3C4.2 0.3 0.4 4 0.4 8.8c0 5.4 5.3 11.4 8.6 16.8 3.3-5.4 8.6-11.4 8.6-16.8C17.6 4 13.8 0.3 9 0.3z" fill="#3a3d41"/><circle cx="9" cy="9.1" r="3.1" fill="#fff"/></svg><span class="t" style="left:1798.3px;top:53.05px;font-size:20px;color:#4d4d48;letter-spacing:0.04px;">La Sirenita</span><span class="t" style="left:2134.8px;top:49.05px;font-size:26px;color:#55554f;transform:scaleX(0.985);">2</span><span class="t" style="left:2154.8px;top:56.05px;font-size:18.5px;color:#55554f;transform:scaleX(1.078);">7/8</span><span class="t" style="left:2269.0px;top:51.05px;font-size:24.5px;color:#828a90;">#</span></div>
<div class="row dark" style="top:1299.4px;background:#735557"><span class="t c " style="left:62.2px;top:49.65px;width:80px;font-size:24px;color:#fff;font-weight:700;-webkit-text-stroke:0;">13</span><span class="t" style="left:191.1px;top:50.65px;font-size:20.3px;color:#f2f2f2;transform:scaleX(0.991);">INT</span><span class="t" style="left:270.5px;top:37.65px;font-size:19.3px;color:#fff;font-weight:700;-webkit-text-stroke:0;transform:scaleX(0.989);">LA SIRENITA CORRIDOR</span><span class="t u" style="left:271.2px;top:63.65px;font-size:20px;color:#fff;letter-spacing:0.72px;">Stuart emerges from the bathroom, cleaned up.</span><span class="t" style="left:1461.3px;top:50.65px;font-size:20.3px;color:#f4f4f4;transform:scaleX(0.942);">EVENING</span><span class="badge" style="left:1610.9px;top:45.5px;color:#fff">3</span><span class="badge" style="left:1647.6px;top:45.5px;color:#fff">5</span><svg class="ic" style="left:1768.3px;top:46.9px" width="18" height="26" viewBox="0 0 18 26" ><path d="M9 0.3C4.2 0.3 0.4 4 0.4 8.8c0 5.4 5.3 11.4 8.6 16.8 3.3-5.4 8.6-11.4 8.6-16.8C17.6 4 13.8 0.3 9 0.3z" fill="#fff"/><circle cx="9" cy="9.1" r="3.1" fill="#735557"/></svg><span class="t" style="left:1798.3px;top:53.65px;font-size:20px;color:#fff;letter-spacing:0.04px;">La Sirenita</span><span class="t" style="left:2148.0px;top:50.65px;font-size:19px;color:#f4f4f4;transform:scaleX(1.029);">2/8</span><span class="t" style="left:2269.0px;top:50.65px;font-size:24.5px;color:#eef2f4;">#</span></div>
<div class="row dark" style="top:1417.8px;background:#735557"><span class="t c " style="left:62.2px;top:49.25px;width:80px;font-size:24px;color:#fff;font-weight:700;-webkit-text-stroke:0;">12</span><span class="t" style="left:191.1px;top:50.25px;font-size:20.3px;color:#f2f2f2;transform:scaleX(0.991);">INT</span><span class="t" style="left:270.5px;top:37.25px;font-size:19.3px;color:#fff;font-weight:700;-webkit-text-stroke:0;letter-spacing:0.18px;">LA SIRENITA BATHROOM</span><span class="t u" style="left:271.2px;top:64.25px;font-size:20px;color:#fff;letter-spacing:0.75px;">Stuart enters the dingy and poorly lit bathroom.</span><span class="t" style="left:1461.3px;top:50.25px;font-size:20.3px;color:#f4f4f4;transform:scaleX(0.942);">EVENING</span><span class="badge" style="left:1629.2px;top:45.2px;color:#fff">1</span><svg class="ic" style="left:1768.3px;top:46.6px" width="18" height="26" viewBox="0 0 18 26" ><path d="M9 0.3C4.2 0.3 0.4 4 0.4 8.8c0 5.4 5.3 11.4 8.6 16.8 3.3-5.4 8.6-11.4 8.6-16.8C17.6 4 13.8 0.3 9 0.3z" fill="#fff"/><circle cx="9" cy="9.1" r="3.1" fill="#735557"/></svg><span class="t" style="left:1798.3px;top:53.25px;font-size:20px;color:#fff;letter-spacing:0.04px;">La Sirenita</span><span class="t" style="left:2148.0px;top:51.25px;font-size:19px;color:#f4f4f4;transform:scaleX(1.029);">5/8</span><span class="t" style="left:2269.0px;top:50.25px;font-size:24.5px;color:#eef2f4;">#</span></div>
<div class="db" style="top:1535.6px;height:85.5px"><span class="t" style="left:674.5px;top:33.45px;font-size:23.5px;color:#fff;font-weight:700;-webkit-text-stroke:0;transform:scaleX(0.996);">End of Day 2 of 3</span><span class="abs" style="left:883.5px;top:44.2px;width:20.5px;height:2px;background:#2d3135"></span><span class="abs" style="left:1184px;top:44.2px;width:20.5px;height:2px;background:#2d3135"></span><span class="abs" style="left:1425px;top:44.2px;width:20.5px;height:2px;background:#2d3135"></span><span class="t" style="left:928.5px;top:33.45px;font-size:23.5px;color:#e9eaeb;letter-spacing:0.34px;">Total Pages:</span><span class="t" style="left:1072.5px;top:33.45px;font-size:23.5px;color:#e9eaeb;">4</span><span class="t" style="left:1092.0px;top:38.45px;font-size:17.5px;color:#e9eaeb;transform:scaleX(1.144);">4/8</span><span class="t" style="left:1126.5px;top:33.45px;font-size:23.5px;color:#e9eaeb;transform:scaleX(1.029);">pgs</span><span class="t" style="left:1228.3px;top:33.45px;font-size:23.5px;color:#e9eaeb;letter-spacing:0.26px;">Est. Time:</span><span class="t" style="left:1347.5px;top:33.45px;font-size:23.5px;color:#e9eaeb;letter-spacing:0.47px;">0.00h</span><span class="t" style="left:1508.5px;top:33.45px;font-size:23.5px;color:#e9eaeb;transform:scaleX(0.99);">Sun, Jun 2, 2019</span></div>
<div class="row dark" style="top:1620.4px;background:#5aafb4"><span class="t c " style="left:62.2px;top:51.65px;width:80px;font-size:24px;color:#fff;font-weight:700;-webkit-text-stroke:0;">10</span><span class="t" style="left:191.1px;top:52.65px;font-size:20.3px;color:#f2f2f2;transform:scaleX(0.991);">INT</span><span class="t" style="left:271.5px;top:39.65px;font-size:19.3px;color:#fff;font-weight:700;-webkit-text-stroke:0;transform:scaleX(0.928);">STUART’S CAR</span><span class="t u" style="left:270.2px;top:65.65px;font-size:20px;color:#fff;letter-spacing:0.47px;">Claire drives.</span><span class="t" style="left:1458.6px;top:51.65px;font-size:20.3px;color:#f4f4f4;transform:scaleX(0.945);">TWILIGHT</span><span class="badge" style="left:1610.9px;top:47.1px;color:#fff">1</span><span class="badge" style="left:1647.6px;top:47.1px;color:#fff">2</span><svg class="ic" style="left:1768.3px;top:48.5px" width="18" height="26" viewBox="0 0 18 26" ><path d="M9 0.3C4.2 0.3 0.4 4 0.4 8.8c0 5.4 5.3 11.4 8.6 16.8 3.3-5.4 8.6-11.4 8.6-16.8C17.6 4 13.8 0.3 9 0.3z" fill="#fff"/><circle cx="9" cy="9.1" r="3.1" fill="#5aafb4"/></svg><span class="t" style="left:1798.3px;top:54.65px;font-size:20px;color:#fff;letter-spacing:0.04px;">La Sirenita</span><span class="t" style="left:2148.0px;top:52.65px;font-size:19px;color:#f4f4f4;transform:scaleX(1.029);">2/8</span><span class="t" style="left:2269.0px;top:52.65px;font-size:24.5px;color:#eef2f4;">#</span></div>
<div class="row dark" style="top:1738.9px;background:#a06464"><span class="t c " style="left:62.2px;top:50.15px;width:80px;font-size:24px;color:#fff;font-weight:700;-webkit-text-stroke:0;">8</span><span class="t" style="left:191.1px;top:52.15px;font-size:20.3px;color:#f2f2f2;transform:scaleX(0.991);">INT</span><span class="t" style="left:271.5px;top:38.15px;font-size:19.3px;color:#fff;font-weight:700;-webkit-text-stroke:0;transform:scaleX(0.925);">SKIPP’S STAGE</span><span class="t u" style="left:271.2px;top:65.15px;font-size:20px;color:#fff;letter-spacing:0.24px;">STUART'S POV: Tony and Claire discuss his mixing equipment as his...</span><span class="t" style="left:1477.5px;top:51.15px;font-size:20.3px;color:#f4f4f4;transform:scaleX(0.942);">DUSK</span><span class="badge" style="left:1610.9px;top:46.4px;color:#fff">1</span><span class="badge" style="left:1647.6px;top:46.4px;color:#fff">4</span><svg class="ic" style="left:1768.3px;top:47.8px" width="18" height="26" viewBox="0 0 18 26" ><path d="M9 0.3C4.2 0.3 0.4 4 0.4 8.8c0 5.4 5.3 11.4 8.6 16.8 3.3-5.4 8.6-11.4 8.6-16.8C17.6 4 13.8 0.3 9 0.3z" fill="#fff"/><circle cx="9" cy="9.1" r="3.1" fill="#a06464"/></svg><span class="t" style="left:1798.3px;top:54.15px;font-size:20px;color:#fff;letter-spacing:0.04px;">La Sirenita</span><span class="t" style="left:2134.8px;top:50.15px;font-size:26px;color:#f4f4f4;transform:scaleX(0.985);">2</span><span class="t" style="left:2154.8px;top:57.15px;font-size:18.5px;color:#f4f4f4;transform:scaleX(1.078);">0/0</span><span class="t" style="left:2269.0px;top:51.15px;font-size:24.5px;color:#eef2f4;">#</span></div>
<div class="abs" style="left:161px;top:1850px;width:2493px;height:20px;background:#a06464"></div>
</main>
<div class="popup">
<div class="search" style="left:51px;top:51.7px;width:447.5px;height:51.2px"></div>
<svg class="ic" style="left:64px;top:64.0px" width="25" height="25" viewBox="0 0 25 25" ><circle cx="10" cy="10" r="8.7" fill="none" stroke="#bdbdbd" stroke-width="1.4"/><path d="M16.3 16.3l7.2 7.2" stroke="#bdbdbd" stroke-width="2" stroke-linecap="round"/></svg>
<span class="t" style="left:96.3px;top:66.55px;font-size:22px;color:#9c9c9c;transform:scaleX(0.977);">Search existing locations...</span>
<span class="t" style="left:52.2px;top:140.55px;font-size:19.2px;color:#363636;font-weight:700;-webkit-text-stroke:0;transform:scaleX(0.94);">ASSIGN LOCATIONS</span>
<div class="cb off" style="left:69px;top:199.7px"></div>
<span class="t" style="left:116.4px;top:205.55px;font-size:21px;color:#5e5e5e;letter-spacing:0.51px;">Encino Neighborhood</span>
<div class="hl" style="left:37px;top:252.5px;width:480.5px;height:63.5px"></div>
<div class="cb on" style="left:69px;top:269.2px"></div>
<svg class="ic" style="left:75.5px;top:277.0px" width="18" height="14" viewBox="0 0 18 14" ><path d="M1.8 6.8l4.7 4.7L16.2 1.8" fill="none" stroke="#f4faff" stroke-width="2.5"/></svg>
<span class="t" style="left:116.4px;top:274.55px;font-size:21px;color:#444;letter-spacing:0.09px;">La Sirenita</span>
<div class="hr" style="left:17.4px;top:492.5px;width:515.4px"></div>
<svg class="ic" style="left:59px;top:534.5px" width="15" height="15" viewBox="0 0 15 15" ><path d="M7.5 0.5v14M0.5 7.5h14" stroke="#3c98cf" stroke-width="1.7" fill="none"/></svg>
<a class="t" style="left:85.5px;top:534.55px;font-size:22.5px;color:#3c98cf;letter-spacing:0.49px;">Add Location</a>
<a class="t" style="left:308.5px;top:534.55px;font-size:22.5px;color:#3c98cf;letter-spacing:0.43px;">Manage Locations</a>
</div>
</div>
</div>
</div>
</body></html>
